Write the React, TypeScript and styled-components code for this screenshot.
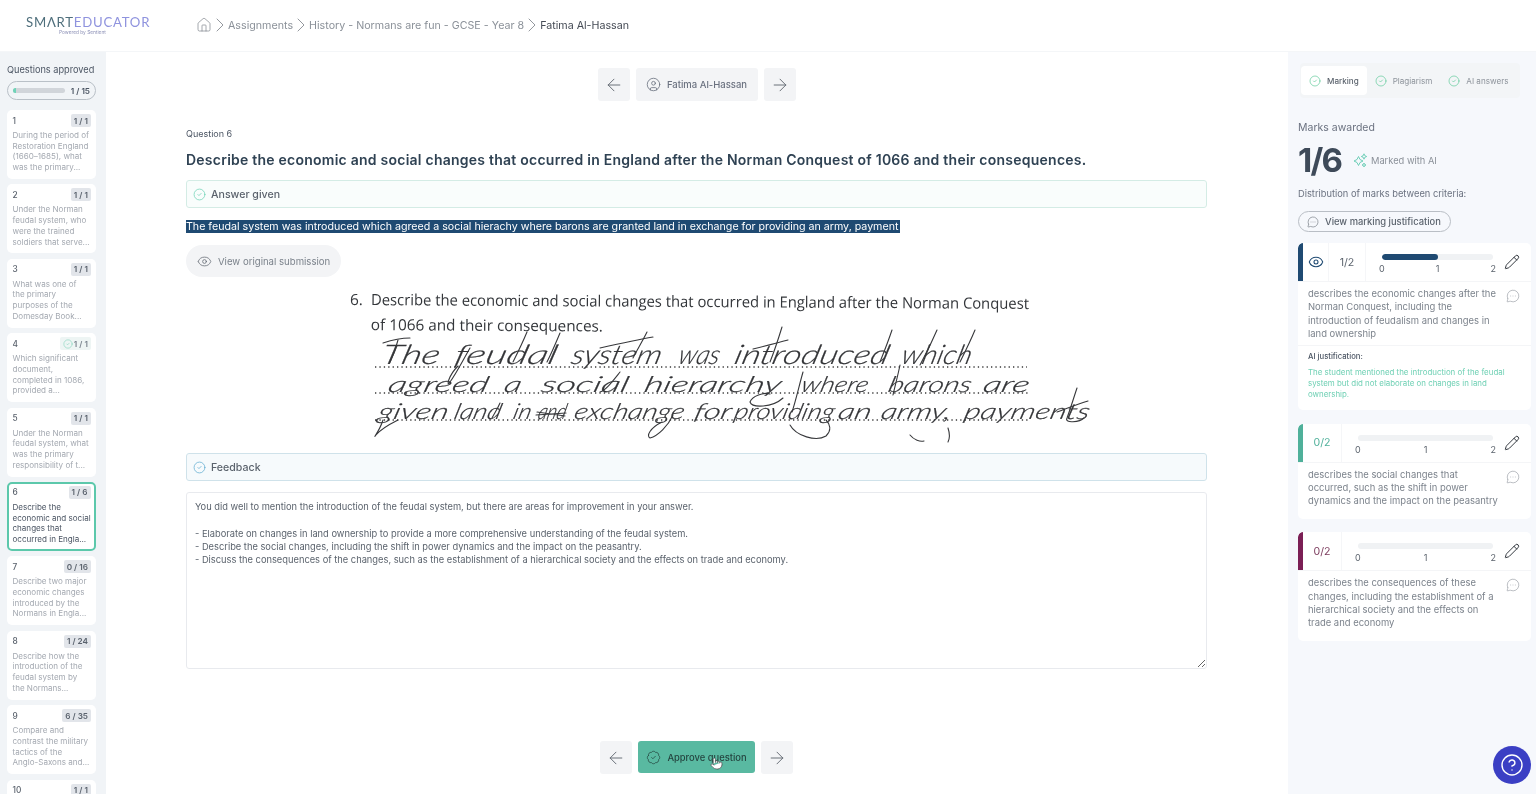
import React from "react";
import styled, { createGlobalStyle } from "styled-components";
import { ArrowLeft, ArrowRight, BadgeCheck, ChevronRight, CircleCheck, CircleHelp, CircleUser, Eye, House, MessageCircleMore, Pencil, Pointer } from "lucide-react";

const Global = createGlobalStyle`
  html, body { margin: 0; padding: 0; height: 794px; overflow: hidden; background: #fff; }
  body { font-family: Inter, "Liberation Sans", sans-serif; color: #4b5563; }
  * { box-sizing: border-box; }
`;
const Page = styled.div`width:1536px;height:794px;display:flex;flex-direction:column;overflow:hidden;position:relative;filter:blur(.3px);`;
const Header = styled.header`height:52px;flex:none;display:flex;align-items:center;padding:0 0 1px 26px;border-bottom:1px solid #f4f6f8;`;
const Logo = styled.div`width:170px;display:flex;flex-direction:column;align-items:flex-start;`;
const LogoMark = styled.div`font-family:Lato,sans-serif;font-size:13.2px;letter-spacing:.75px;line-height:14px;color:#4f6f7c;font-weight:400;span{color:#8f93de;}`;
const LogoSub = styled.div`font-size:4.8px;line-height:6px;color:#8f93b8;margin-left:33px;`;
const Crumbs = styled.nav`display:flex;align-items:center;gap:1px;font-size:10.7px;color:#8b9199;`;
const Sep = styled.span`width:14px;height:16px;flex:none;display:flex;align-items:center;justify-content:center;color:#666c74;svg{flex:none;}`;
const HomeIcon = styled.span`width:16px;height:16px;line-height:0;color:#777d85;`;
const Crumb = styled.span<{ $current?: boolean }>`color:${p => p.$current ? "#454b55" : "#8b9199"};`;
const Body = styled.div`flex:1;display:flex;min-height:0;`;
const Side = styled.aside`width:106px;flex:none;background:#f1f4f7;padding:12px 10px 0 7px;overflow:hidden;`;
const SideTitle = styled.div`font-size:9.2px;line-height:12px;color:#4b5563;white-space:nowrap;`;
const Progress = styled.div`height:19px;margin-top:5px;border:1px solid #b9c0c7;border-radius:10px;display:flex;align-items:center;padding:0 5px;gap:6px;font-size:8.2px;font-weight:600;color:#4b5563;`;
const Track = styled.div`flex:1;height:5px;border-radius:3px;background:#d1d5da;overflow:hidden;`;
const TrackFill = styled.div`height:100%;background:#6fd3b8;`;
const QList = styled.div`display:flex;flex-direction:column;gap:5.4px;margin-top:10px;`;
const QCard = styled.div<{ $active?: boolean }>`height:69px;flex:none;background:#fff;border-radius:5px;padding:${p => p.$active ? "2px 3.5px 0 3.5px" : "4px 5px 0 5.5px"};border:${p => p.$active ? "2px solid #5cc8ab" : "0 none"};`;
const QHead = styled.div`display:flex;justify-content:space-between;align-items:center;height:13px;margin-bottom:3px;`;
const QNum = styled.span`font-size:8.3px;font-weight:500;color:#5a626d;`;
const QBadge = styled.span<{ $ok?: boolean }>`height:13px;padding:0 3px;border-radius:2px;display:flex;align-items:center;gap:1px;font-size:8.2px;font-weight:600;color:${p => p.$ok ? "#7b858f" : "#5a626d"};background:${p => p.$ok ? "#eef5f4" : "#e2e5ea"};`;
const QText = styled.div<{ $active?: boolean }>`font-size:8.05px;line-height:10.7px;white-space:pre;color:${p => p.$active ? "#4b5563" : "#a4a9b1"};`;
const Main = styled.main`flex:1;min-width:0;padding:16px 81px 0 80px;display:flex;flex-direction:column;`;
const NavRow = styled.div`display:flex;justify-content:center;gap:6px;flex:none;`;
const NavBtn = styled.div`width:32px;height:33px;border-radius:3px;background:#f3f4f6;display:flex;align-items:center;justify-content:center;color:#5f666f;`;
const NameBtn = styled.div`width:122px;height:33px;border-radius:3px;background:#f3f4f6;display:flex;align-items:center;justify-content:center;gap:6px;font-size:9.5px;font-weight:500;color:#6b7280;`;
const Eyebrow = styled.div`margin-top:27px;font-size:9px;line-height:12px;color:#4b5563;`;
const Title = styled.h1`margin:11px 0 0;font-size:14px;letter-spacing:.24px;line-height:18px;font-weight:600;color:#2f4253;white-space:nowrap;`;
const Band = styled.div<{ $tone: string; $bg: string; $gap?: number }>`height:28px;margin-top:${p => p.$gap || 0}px;display:flex;align-items:center;gap:5px;padding-left:6px;border:1px solid ${p => p.$tone};background:${p => p.$bg};border-radius:3px;font-size:10.6px;font-weight:500;color:#5b636d;flex:none;`;
const Highlight = styled.div`margin-top:12px;height:13px;line-height:13px;font-size:10.65px;color:#fff;background:#1f4a72;width:714px;white-space:nowrap;overflow:hidden;`;
const OriginalBtn = styled.div`margin-top:12px;width:155px;height:32px;border-radius:16px;background:#f3f4f6;display:flex;align-items:center;gap:6px;padding-left:11px;font-size:9.6px;color:#7b828b;`;
const Scan = styled.svg`display:block;width:1021px;height:165px;margin:8px 0 3px;overflow:visible;flex:none;`;
const Feedback = styled.textarea`margin-top:11px;height:177px;flex:none;width:100%;padding:7px 8px;border:1px solid #e8eaee;border-radius:3px;font:400 9.3px/13.35px Inter,sans-serif;color:#5b636d;background:#fff;outline:none;overflow:hidden;resize:vertical;`;
const BottomRow = styled(NavRow)`margin-top:72px;`;
const Approve = styled.div`position:relative;width:117px;height:32px;border-radius:3px;background:#59b9a1;display:flex;align-items:center;justify-content:center;gap:6px;font-size:9.4px;font-weight:500;color:#24443f;`;
const Cursor = styled.span`position:absolute;left:72px;top:16px;line-height:0;color:#444;`;
const Panel = styled.aside`width:248px;flex:none;background:#f6f8fc;padding:11px 5px 0 10px;overflow:hidden;`;
const Tabs = styled.div`width:220px;height:35px;margin-left:2px;padding:3px 1px;background:#f3f5f7;border-radius:4px;display:flex;align-items:stretch;`;
const Tab = styled.div<{ $on?: boolean }>`display:flex;align-items:center;gap:6px;padding:0 8px;border-radius:4px;font-size:8.1px;font-weight:${p => p.$on ? 500 : 400};color:${p => p.$on ? "#5b636d" : "#8d939b"};background:${p => p.$on ? "#fff" : "transparent"};svg{color:#57c795;flex:none;}`;
const Label = styled.div`margin-top:23px;font-size:10.5px;line-height:13px;color:#6b7280;`;
const MarkRow = styled.div`display:flex;align-items:center;margin-top:8px;height:36px;`;
const Score = styled.div`font-size:33px;font-weight:700;letter-spacing:-1.8px;color:#3e4a59;width:55px;`;
const AiNote = styled.div`display:flex;align-items:center;gap:3px;font-size:9.3px;color:#8b9199;svg{color:#6fcfb8;flex:none;}`;
const Sub = styled.div`margin-top:10px;font-size:9.3px;line-height:12px;color:#6b7280;`;
const Pill = styled.div`margin-top:11px;width:153px;height:21px;border:1px solid #b9bec5;border-radius:11px;display:flex;align-items:center;gap:6px;padding-left:8px;font-size:9.4px;font-weight:500;color:#5b636d;`;
const Card = styled.section<{ $first?: boolean }>`margin-top:${p => p.$first ? 11 : 13.5}px;background:#fff;border-radius:5px;overflow:hidden;`;
const CardHead = styled.div<{ $c: string }>`height:39px;display:flex;align-items:stretch;border-bottom:1px solid #f4f5f7;&::before{content:"";width:5px;flex:none;background:${p => p.$c};border-radius:5px 0 0 0;}`;
const Cell = styled.div<{ $w: number; $c?: string }>`width:${p => p.$w}px;flex:none;display:flex;align-items:center;justify-content:center;font-size:10.6px;color:${p => p.$c || "#5b636d"};border-right:1px solid #f5f6f8;`;
const Scale = styled.div`flex:1;padding:11px 0 0 16px;display:flex;flex-direction:column;gap:3px;`;
const ScaleBar = styled.div`height:6px;border-radius:3px;background:#f0f2f4;overflow:hidden;`;
const ScaleFill = styled.div`height:100%;width:50%;border-radius:3px;background:#1f4a72;`;
const ScaleNums = styled.div`display:flex;justify-content:space-between;font-size:9px;line-height:12px;color:#5b636d;margin:0 -3px;`;
const EditCell = styled.div`width:38px;flex:none;padding:11px 0 0 11px;color:#33383f;`;
const CardBody = styled.div<{ $last?: boolean }>`display:flex;gap:4px;padding:5px 6px ${p => p.$last ? 11 : 5}px 10px;`;
const Desc = styled.div`width:194px;flex:none;font-size:9.45px;line-height:13.35px;color:#7c838c;`;
const CommentIcon = styled.span`margin-top:2px;color:#8b9199;line-height:0;`;
const Just = styled.div`border-top:1px solid #f4f5f7;padding:5px 8px 11px 10px;`;
const JustTitle = styled.div`font-size:7.7px;line-height:12px;font-weight:500;color:#4b5563;`;
const JustText = styled.div`margin-top:4px;font-size:7.9px;line-height:10.6px;color:#6fd0b4;`;
const Help = styled.div`position:absolute;left:1493px;top:746px;width:38px;height:38px;border-radius:50%;background:#3b3fc4;display:flex;align-items:center;justify-content:center;color:#fff;`;
const Print = styled.text`font-family:"Open Sans",sans-serif;font-size:15.4px;fill:#33363a;`;
const Hand = styled.text`font-family:Lato,"Liberation Sans",sans-serif;font-weight:300;font-style:italic;fill:#333437;stroke:#333437;stroke-width:.2px;`;
const Dots = styled.line`stroke:#3a3a3a;stroke-width:1.4;stroke-dasharray:1.3 3.1;`;
const Pen = styled.path`fill:none;stroke:#37383b;stroke-width:1.1;stroke-linecap:round;stroke-linejoin:round;`;

const questions: [string, string, string][] = [
  ["1", "1 / 1", "During the period of\nRestoration England\n(1660–1685), what\nwas the primary..."],
  ["2", "1 / 1", "Under the Norman\nfeudal system, who\nwere the trained\nsoldiers that serve..."],
  ["3", "1 / 1", "What was one of\nthe primary\npurposes of the\nDomesday Book..."],
  ["4", "1 / 1", "Which significant\ndocument,\ncompleted in 1086,\nprovided a..."],
  ["5", "1 / 1", "Under the Norman\nfeudal system, what\nwas the primary\nresponsibility of t..."],
  ["6", "1 / 6", "Describe the\neconomic and social\nchanges that\noccurred in Engla..."],
  ["7", "0 / 16", "Describe two major\neconomic changes\nintroduced by the\nNormans in Engla..."],
  ["8", "1 / 24", "Describe how the\nintroduction of the\nfeudal system by\nthe Normans..."],
  ["9", "6 / 35", "Compare and\ncontrast the military\ntactics of the\nAnglo-Saxons and..."],
  ["10", "1 / 1", ""],
];
type W = [string, number, number];
const rows: { y: number; size: number; words: W[] }[] = [
  { y: 364, size: 27, words: [["The", 380, 58], ["feudal", 453, 102], ["system", 570, 90], ["was", 677, 41], ["introduced", 733, 154], ["which", 900, 70]] },
  { y: 392, size: 22, words: [["agreed", 387, 100], ["a", 503, 17], ["social", 540, 87], ["hierarchy", 643, 137], ["where", 800, 67], ["barons", 887, 83], ["are", 982, 46]] },
  { y: 419, size: 22, words: [["given", 377, 70], ["land", 453, 47], ["in", 512, 18], ["and", 537, 28], ["exchange", 573, 110], ["for", 693, 37], ["providing", 733, 100], ["an", 837, 33], ["army,", 880, 70], ["payments", 963, 125]] },
];
const flourishes = [
  "M383 343 C392 340 402 338 410 338", "M398 340 C396 348 393 356 390 362",
  "M470 348 C462 362 456 374 450 382 C446 388 448 376 458 366",
  "M527 332 C522 344 517 354 513 362", "M560 333 C555 345 551 354 547 362",
  "M647 332 C642 342 637 350 633 358", "M600 348 C618 344 636 340 653 337",
  "M782 327 C778 340 774 352 770 362", "M753 349 C765 346 777 343 788 340",
  "M892 330 C888 342 884 352 880 362", "M937 330 C931 344 926 354 920 365", "M975 330 C970 342 965 352 960 362",
  "M900 365 C898 375 895 386 893 395",
  "M620 372 C612 382 606 390 600 392", "M803 372 C799 386 796 400 792 412",
  "M783 398 C772 408 752 408 750 402 C752 396 764 392 770 394",
  "M383 420 C380 430 372 440 376 435 C380 430 390 424 398 420",
  "M500 403 C497 410 494 414 492 418",
  "M673 415 C668 426 658 436 650 438 C646 436 650 428 662 422",
  "M790 425 C796 436 816 442 826 436 C832 430 830 424 826 420",
  "M910 435 C914 440 920 442 924 441 M948 428 C950 434 950 438 948 442",
  "M1057 412 C1068 408 1078 404 1088 401", "M1077 388 C1073 400 1070 410 1067 418 C1064 424 1080 422 1084 418",
  "M536 415 L566 413 M537 412 L565 416",
];

export default function App() {
  return (
    <Page>
      <Global />
      <Header>
        <Logo>
          <LogoMark>SMΛRT<span>EDUCATOR</span></LogoMark>
          <LogoSub>Powered by Sentient</LogoSub>
        </Logo>
        <Crumbs>
          <HomeIcon><House size={16} strokeWidth={1} /></HomeIcon>
          <Sep><ChevronRight size={24} strokeWidth={.7} /></Sep>
          <Crumb>Assignments</Crumb>
          <Sep><ChevronRight size={24} strokeWidth={.7} /></Sep>
          <Crumb>History - Normans are fun - GCSE - Year 8</Crumb>
          <Sep><ChevronRight size={24} strokeWidth={.7} /></Sep>
          <Crumb $current>Fatima Al-Hassan</Crumb>
        </Crumbs>
      </Header>
      <Body>
        <Side>
          <SideTitle>Questions approved</SideTitle>
          <Progress>
            <Track><TrackFill style={{ width: `${(1 / 15) * 100}%` }} /></Track>
            <span>1 / 15</span>
          </Progress>
          <QList>
            {questions.map(([n, m, t]) => (
              <QCard key={n} $active={n === "6"}>
                <QHead>
                  <QNum>{n}</QNum>
                  <QBadge $ok={n === "4"}>{n === "4" && <CircleCheck size={10} strokeWidth={1.2} color="#6fcfb0" />}{m}</QBadge>
                </QHead>
                <QText $active={n === "6"}>{t}</QText>
              </QCard>
            ))}
          </QList>
        </Side>
        <Main>
          <NavRow>
            <NavBtn><ArrowLeft size={20} strokeWidth={1.1} /></NavBtn>
            <NameBtn><CircleUser size={15} strokeWidth={1.3} />Fatima Al-Hassan</NameBtn>
            <NavBtn><ArrowRight size={20} strokeWidth={1.1} /></NavBtn>
          </NavRow>
          <Eyebrow>Question 6</Eyebrow>
          <Title>Describe the economic and social changes that occurred in England after the Norman Conquest of 1066 and their consequences.</Title>
          <Band $tone="#d4ece5" $bg="#f9fdfc" $gap={11}><CircleCheck size={13} strokeWidth={1.3} color="#66d0b2" />Answer given</Band>
          <Highlight>The feudal system was introduced which agreed a social hierachy where barons are granted land in exchange for providing an army, payment</Highlight>
          <OriginalBtn><Eye size={15} strokeWidth={1.2} color="#5f666f" />View original submission</OriginalBtn>
          <Scan viewBox="186 285 1021 165">
            <g transform="rotate(.33 350 300)">
              <Print x="350" y="305">6.</Print>
              <Print x="371" y="305" textLength="658" lengthAdjust="spacingAndGlyphs">Describe the economic and social changes that occurred in England after the Norman Conquest</Print>
              <Print x="371" y="330" textLength="232" lengthAdjust="spacingAndGlyphs">of 1066 and their consequences.</Print>
            </g>
            <Dots x1="375" y1="367" x2="1027" y2="367" />
            <Dots x1="375" y1="393" x2="1028" y2="393" />
            <Dots x1="375" y1="420" x2="1030" y2="420" />
            {rows.map(r => r.words.map(([w, x, len]) => (
              <Hand key={w + x} transform={`translate(${x} ${r.y}) skewX(-14)`} fontSize={r.size} textLength={len} lengthAdjust="spacingAndGlyphs">{w}</Hand>
            )))}
            {flourishes.map(d => <Pen key={d} d={d} />)}
          </Scan>
          <Band $tone="#cfe2ea" $bg="#f6fafc"><CircleCheck size={13} strokeWidth={1.3} color="#58a8cf" />Feedback</Band>
          <Feedback readOnly defaultValue={"You did well to mention the introduction of the feudal system, but there are areas for improvement in your answer.\n\n- Elaborate on changes in land ownership to provide a more comprehensive understanding of the feudal system.\n- Describe the social changes, including the shift in power dynamics and the impact on the peasantry.\n- Discuss the consequences of the changes, such as the establishment of a hierarchical society and the effects on trade and economy."} />
          <BottomRow>
            <NavBtn><ArrowLeft size={20} strokeWidth={1.1} /></NavBtn>
            <Approve>
              <BadgeCheck size={15} strokeWidth={1.2} />Approve question
              <Cursor><Pointer size={13} strokeWidth={1.2} fill="#fff" /></Cursor>
            </Approve>
            <NavBtn><ArrowRight size={20} strokeWidth={1.1} /></NavBtn>
          </BottomRow>
        </Main>
        <Panel>
          <Tabs>
            <Tab $on><CircleCheck size={12} strokeWidth={1.3} />Marking</Tab>
            <Tab><CircleCheck size={12} strokeWidth={1.3} />Plagiarism</Tab>
            <Tab><CircleCheck size={12} strokeWidth={1.3} />AI answers</Tab>
          </Tabs>
          <Label>Marks awarded</Label>
          <MarkRow>
            <Score>1/6</Score>
            <AiNote>
              <svg width="15" height="15" viewBox="0 0 15 15" fill="none" stroke="currentColor" strokeWidth="1" strokeLinejoin="round">
                <path d="M5.5 3.5 L7 6.5 L10 8 L7 9.5 L5.5 12.5 L4 9.5 L1 8 L4 6.5 Z" />
                <path d="M11 .8 L11.8 2.7 L13.7 3.5 L11.8 4.3 L11 6.2 L10.2 4.3 L8.3 3.5 L10.2 2.7 Z" />
                <path d="M11 10 L11.6 11.4 L13 12 L11.6 12.6 L11 14 L10.4 12.6 L9 12 L10.4 11.4 Z" />
              </svg>
              Marked with AI
            </AiNote>
          </MarkRow>
          <Sub>Distribution of marks between criteria:</Sub>
          <Pill><MessageCircleMore size={12} strokeWidth={1.1} />View marking justification</Pill>
          <Card $first>
            <CardHead $c="#1f4a72">
              <Cell $w={26}><Eye size={16} strokeWidth={1.6} color="#1f4a72" /></Cell>
              <Cell $w={37}>1/2</Cell>
              <Scale>
                <ScaleBar><ScaleFill /></ScaleBar>
                <ScaleNums><span>0</span><span>1</span><span>2</span></ScaleNums>
              </Scale>
              <EditCell><Pencil size={16} strokeWidth={1.5} /></EditCell>
            </CardHead>
            <CardBody>
              <Desc>describes the economic changes after the Norman Conquest, including the introduction of feudalism and changes in land ownership</Desc>
              <CommentIcon><MessageCircleMore size={14} strokeWidth={1} /></CommentIcon>
            </CardBody>
            <Just>
              <JustTitle>AI justification:</JustTitle>
              <JustText>The student mentioned the introduction of the feudal system but did not elaborate on changes in land ownership.</JustText>
            </Just>
          </Card>
          <Card>
            <CardHead $c="#4fb09a">
              <Cell $w={39} $c="#4fb09a">0/2</Cell>
              <Scale>
                <ScaleBar />
                <ScaleNums><span>0</span><span>1</span><span>2</span></ScaleNums>
              </Scale>
              <EditCell><Pencil size={16} strokeWidth={1.5} /></EditCell>
            </CardHead>
            <CardBody $last>
              <Desc>describes the social changes that occurred, such as the shift in power dynamics and the impact on the peasantry</Desc>
              <CommentIcon><MessageCircleMore size={14} strokeWidth={1} /></CommentIcon>
            </CardBody>
          </Card>
          <Card>
            <CardHead $c="#7b1f55">
              <Cell $w={39} $c="#7b3a5c">0/2</Cell>
              <Scale>
                <ScaleBar />
                <ScaleNums><span>0</span><span>1</span><span>2</span></ScaleNums>
              </Scale>
              <EditCell><Pencil size={16} strokeWidth={1.5} /></EditCell>
            </CardHead>
            <CardBody $last>
              <Desc>describes the consequences of these changes, including the establishment of a hierarchical society and the effects on trade and economy</Desc>
              <CommentIcon><MessageCircleMore size={14} strokeWidth={1} /></CommentIcon>
            </CardBody>
          </Card>
        </Panel>
      </Body>
      <Help><CircleHelp size={24} strokeWidth={1.4} /></Help>
    </Page>
  );
}
